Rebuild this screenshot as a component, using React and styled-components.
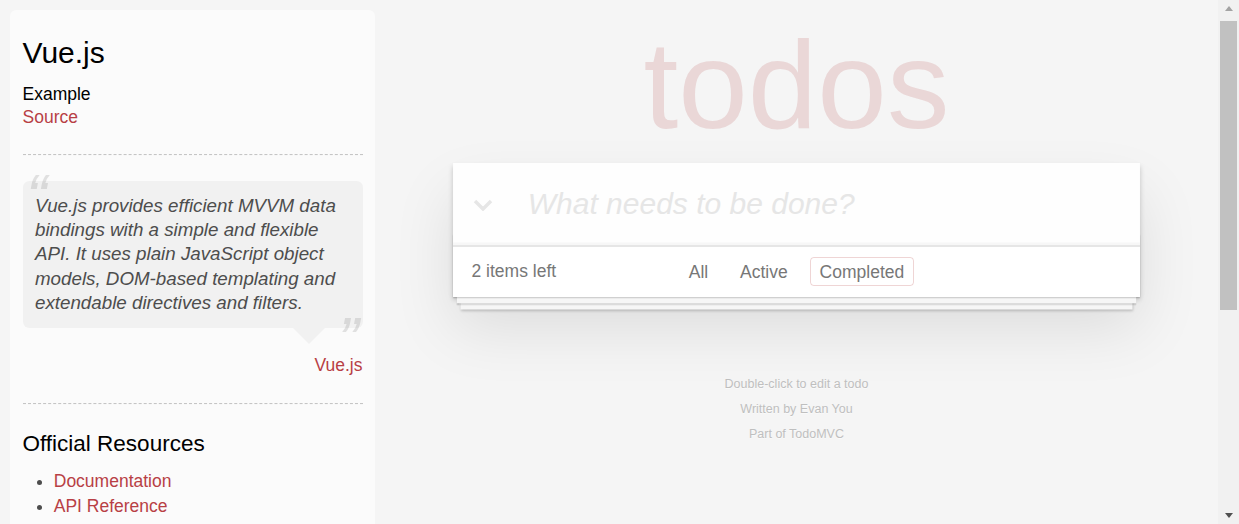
import React from "react";
import styled, { createGlobalStyle } from "styled-components";

// everything below is laid out at 1.25x of the classic TodoMVC sizes
const GlobalStyle = createGlobalStyle`
  html,
  body {
    margin: 0;
    padding: 0;
  }
  body {
    background: #f5f5f5;
    color: #4d4d4d;
    font-family: "Liberation Sans", Arial, sans-serif;
    font-size: 17.5px;
    line-height: 24.5px;
    font-weight: 300;
  }
`;

const Window = styled.div`
  display: flex;
  height: 100vh;
  overflow: hidden;
`;

const Page = styled.div`
  flex: 1;
  min-width: 0;
  display: flex;
  align-items: flex-start;
`;

const ScrollBar = styled.div`
  flex: none;
  width: 21px;
  display: flex;
  flex-direction: column;
  background: #f1f1f1;
`;

const ScrollButton = styled.div`
  flex: none;
  height: 21px;
  display: flex;
  align-items: center;
  justify-content: center;

  &::before {
    content: "";
    border: 4.5px solid transparent;
    ${(p) =>
      p.$down
        ? "border-top: 5px solid #505050; border-bottom: 0; margin-top: 4px;"
        : "border-bottom: 5px solid #a3a3a3; border-top: 0; margin-bottom: 4px;"}
  }
`;

const Track = styled.div`
  flex: 1;
`;

const Thumb = styled.div`
  height: 289px;
  margin: 0 2px;
  background: #c1c1c1;
`;

const Learn = styled.aside`
  flex: none;
  box-sizing: border-box;
  width: 365px;
  margin: 10px 0 0 10px;
  padding: 12.5px;
  border-radius: 6.25px;
  background: rgba(255, 255, 255, 0.6);

  a {
    color: #b83f45;
    font-weight: normal;
    text-decoration: none;
  }
`;

const Heading = styled.h3`
  margin: 12.5px 0;
  font-size: ${(p) => p.size || 30}px;
  font-weight: 500;
  line-height: 1.2;
  color: #000;
`;

const SubHeading = styled.h5`
  margin: 12.5px 0 0;
  font-size: 17.5px;
  font-weight: 500;
  line-height: 1.2;
  color: #000;
`;

const Rule = styled.hr`
  margin: 25px 0;
  border: 0;
  border-top: 1px dashed #c5c5c5;
  border-bottom: 1px dashed #f7f7f7;
`;

const Quote = styled.blockquote`
  position: relative;
  margin: 25px 0 75px;
  padding: 12.5px;
  border-radius: 6.25px;
  background: rgba(0, 0, 0, 0.04);

  &::after {
    content: "";
    position: absolute;
    top: 100%;
    right: 37.5px;
    border: 16.25px solid transparent;
    border-top-color: rgba(0, 0, 0, 0.04);
  }
`;

const QuoteText = styled.p`
  margin: 0;
  font-size: 18.75px;
  line-height: 1.3;
  font-style: italic;

  &::before,
  &::after {
    position: absolute;
    font-size: 62.5px;
    opacity: 0.15;
  }
  &::before {
    content: "“";
    top: -25px;
    left: 3.75px;
  }
  &::after {
    content: "”";
    bottom: -52.5px;
    right: 3.75px;
  }
`;

const QuoteSource = styled.footer`
  position: absolute;
  right: 0;
  bottom: -50px;
`;

const LinkList = styled.ul`
  margin: 0 0 37.5px 31.25px;
  padding: 0;

  li {
    line-height: 25px;
  }
`;

const Note = styled.footer`
  em {
    font-size: 17.5px;
  }
`;

const Main = styled.main`
  flex: 1;
  min-width: 0;
  display: flex;
  justify-content: center;
`;

const Column = styled.section`
  width: 687.5px;
  padding-top: 22px;
`;

const Title = styled.h1`
  margin: 0 0 15.5px;
  font-size: 125px;
  font-weight: 100;
  line-height: 125px;
  text-align: center;
  color: rgba(175, 47, 47, 0.15);
  text-rendering: optimizeLegibility;
`;

const TodoApp = styled.div`
  position: relative;
  background: #fff;
  box-shadow: 0 2.5px 5px 0 rgba(0, 0, 0, 0.2),
    0 31px 62px 0 rgba(0, 0, 0, 0.1);
`;

const Header = styled.header`
  position: relative;
`;

const NewTodo = styled.input`
  display: block;
  box-sizing: border-box;
  width: 100%;
  margin: 0;
  padding: 20px 20px 20px 75px;
  border: none;
  outline: none;
  background: rgba(0, 0, 0, 0.003);
  box-shadow: inset 0 -2.5px 1.25px rgba(0, 0, 0, 0.03);
  font-family: inherit;
  font-size: 30px;
  font-weight: inherit;
  line-height: 42px;
  color: inherit;

  &::placeholder {
    font-style: italic;
    font-weight: 300;
    color: #e6e6e6;
  }
`;

const ToggleAll = styled.span`
  position: absolute;
  left: 20px;
  top: 36px;
  display: flex;
`;

const TodoList = styled.ul`
  margin: 0;
  padding: 0;
  list-style: none;
  border-top: 1px solid #e6e6e6;
`;

const Footer = styled.footer`
  position: relative;
  display: grid;
  grid-template-columns: 1fr auto 1fr;
  align-items: center;
  height: 25px;
  padding: 12.5px 18.75px;
  border-top: 1px solid #e6e6e6;
  color: #777;

  &::before {
    content: "";
    position: absolute;
    right: 0;
    bottom: 0;
    left: 0;
    height: 62.5px;
    overflow: hidden;
    box-shadow: 0 1.25px 1.25px rgba(0, 0, 0, 0.2),
      0 10px 0 -3.75px #f6f6f6, 0 11.25px 1.25px -3.75px rgba(0, 0, 0, 0.2),
      0 20px 0 -7.5px #f6f6f6, 0 21.25px 2.5px -7.5px rgba(0, 0, 0, 0.2);
  }
`;

const Count = styled.span`
  position: relative;
  text-align: left;
`;

const Filters = styled.ul`
  position: relative;
  margin: 0;
  padding: 0;
  list-style: none;

  li {
    display: inline;
  }
`;

const Filter = styled.a`
  margin: 3.75px;
  padding: 3.75px 8.75px;
  border: 1px solid
    ${(p) => (p.$selected ? "rgba(175, 47, 47, 0.2)" : "transparent")};
  border-radius: 3.75px;
  color: inherit;
  text-decoration: none;
`;

const Info = styled.footer`
  margin: 81px auto 0;
  color: #bfbfbf;
  font-size: 12.5px;
  text-align: center;
  text-shadow: 0 1px 0 rgba(255, 255, 255, 0.5);

  p {
    margin: 12.5px 0;
    line-height: 1;
  }
`;

const groups = [
  {
    heading: "Official Resources",
    links: ["Documentation", "API Reference", "Examples", "Vue.js on GitHub"],
  },
  {
    heading: "Community",
    links: ["Twitter", "Gitter Channel", "Discussion Forum", "FAQ"],
  },
];

const filters = ["All", "Active", "Completed"];

const Chevron = () => (
  <svg width="20" height="12" viewBox="0 0 20 12">
    <polyline
      points="2,2 10,10 18,2"
      fill="none"
      stroke="#e6e6e6"
      strokeWidth="3.5"
    />
  </svg>
);

export default function App() {
  return (
    <>
      <GlobalStyle />
      <Window>
        <Page>
          <Learn>
            <header>
              <Heading>Vue.js</Heading>
              <SubHeading>Example</SubHeading>
              <a href="#">Source</a>
            </header>
            <Rule />
            <Quote>
              <QuoteText>
                Vue.js provides efficient MVVM data bindings with a simple and
                flexible API. It uses plain JavaScript object models, DOM-based
                templating and extendable directives and filters.
              </QuoteText>
              <QuoteSource>
                <a href="#">Vue.js</a>
              </QuoteSource>
            </Quote>
            <Rule />
            {groups.map((g) => (
              <div key={g.heading}>
                <Heading size={22.5}>{g.heading}</Heading>
                <LinkList>
                  {g.links.map((l) => (
                    <li key={l}>
                      <a href="#">{l}</a>
                    </li>
                  ))}
                </LinkList>
              </div>
            ))}
            <Note>
              <Rule />
              <em>
                If you have other helpful links to share, or find any of the
                links above no longer work, please <a href="#">let us know</a>.
              </em>
            </Note>
          </Learn>

          <Main>
            <Column>
              <Title>todos</Title>
              <TodoApp>
                <Header>
                  <NewTodo placeholder="What needs to be done?" />
                  <ToggleAll>
                    <Chevron />
                  </ToggleAll>
                </Header>
                <TodoList />
                <Footer>
                  <Count>2 items left</Count>
                  <Filters>
                    {filters.map((f) => (
                      <React.Fragment key={f}>
                        <li>
                          <Filter href="#" $selected={f === "Completed"}>
                            {f}
                          </Filter>
                        </li>{" "}
                      </React.Fragment>
                    ))}
                  </Filters>
                  <span />
                </Footer>
              </TodoApp>
              <Info>
                <p>Double-click to edit a todo</p>
                <p>Written by Evan You</p>
                <p>Part of TodoMVC</p>
              </Info>
            </Column>
          </Main>
        </Page>
        <ScrollBar>
          <ScrollButton />
          <Track>
            <Thumb />
          </Track>
          <ScrollButton $down />
        </ScrollBar>
      </Window>
    </>
  );
}
